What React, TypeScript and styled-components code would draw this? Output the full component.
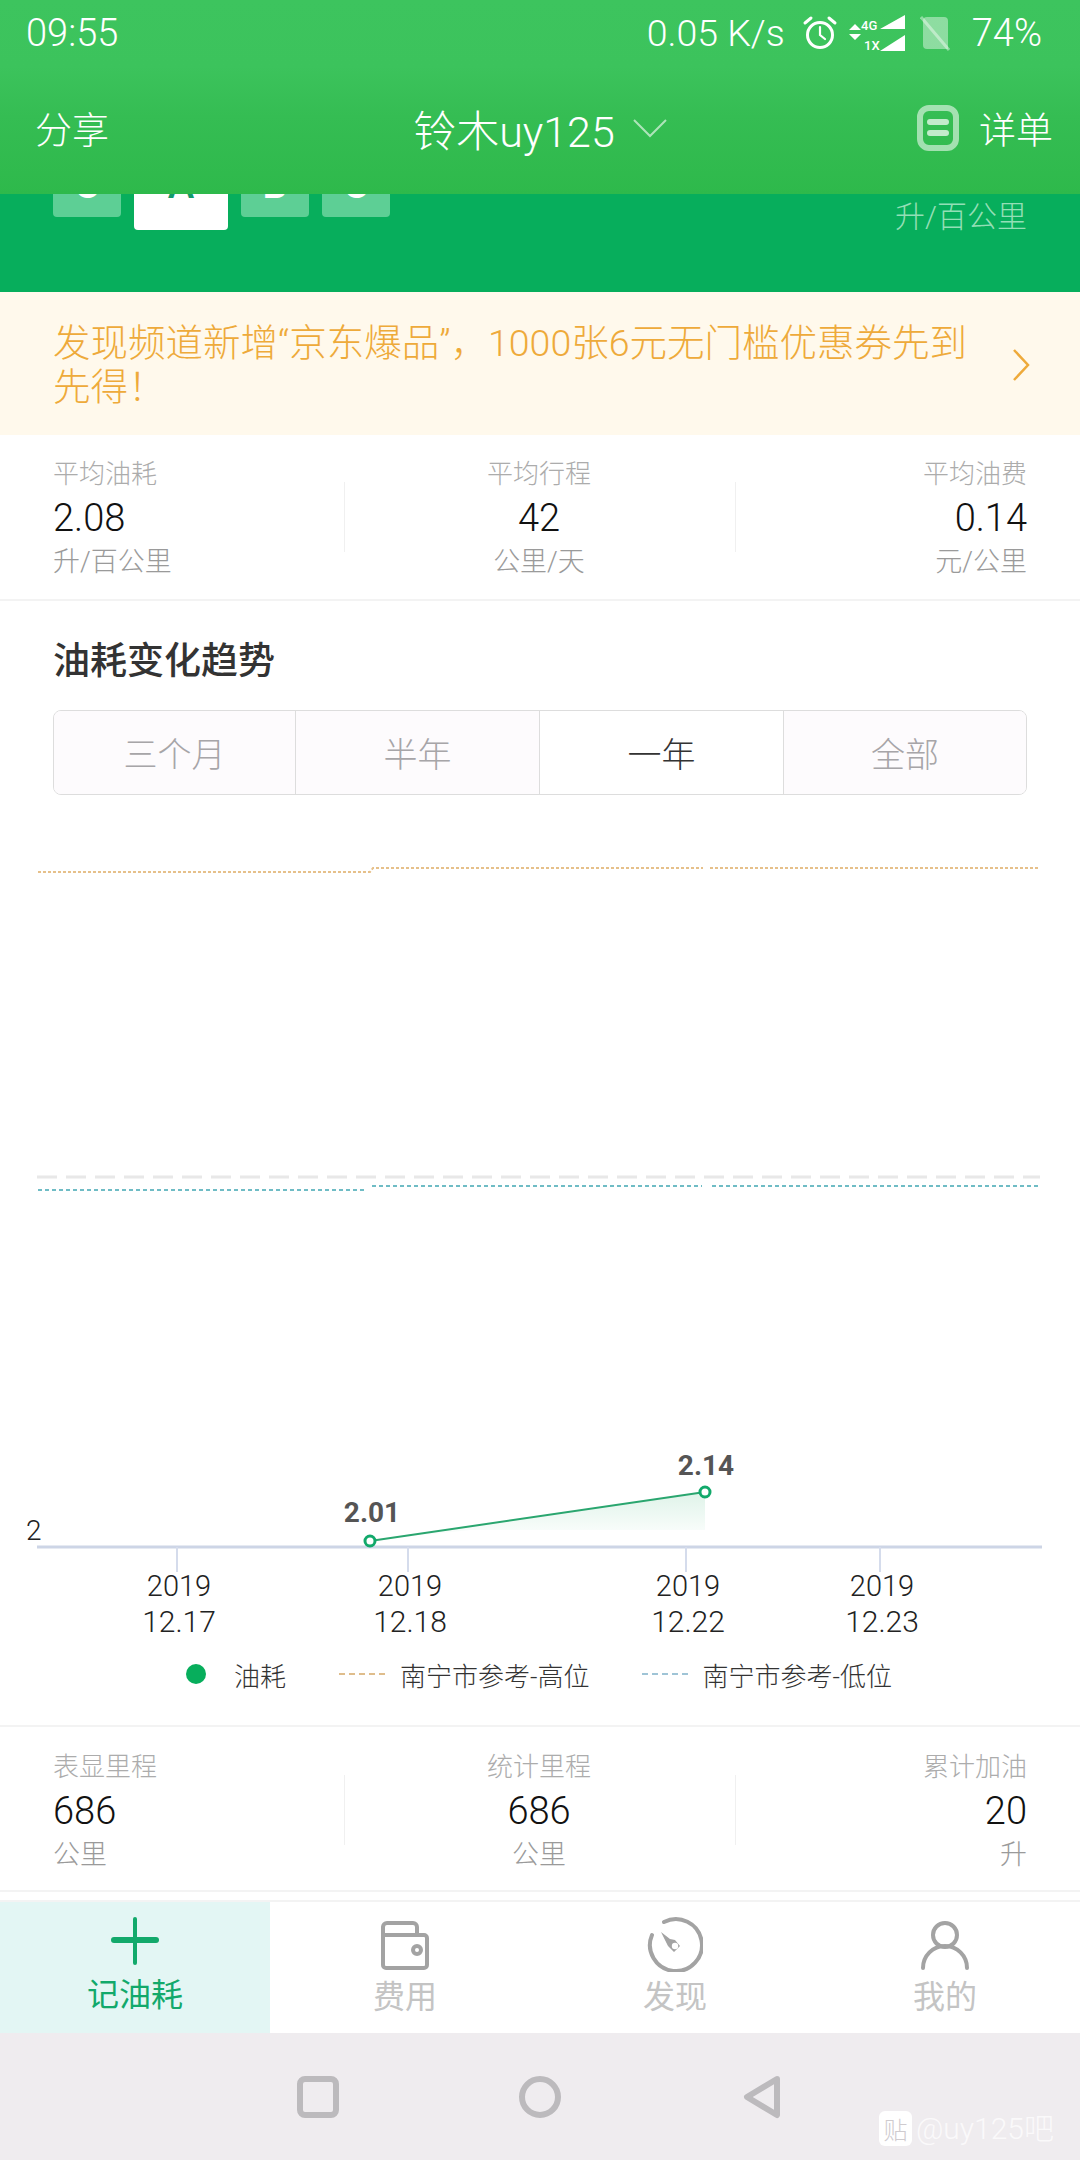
import styled, { createGlobalStyle } from 'styled-components';

const GlobalStyle = createGlobalStyle`
  html, body {
    margin: 0;
    padding: 0;
    background: #ffffff;
  }
  * {
    box-sizing: border-box;
  }
`;

const Page = styled.div`
  position: relative;
  width: 1080px;
  height: 2160px;
  overflow: hidden;
  display: flex;
  flex-direction: column;
  background: #ffffff;
  font-family: Roboto, 'Noto Sans CJK SC', sans-serif;
  font-weight: 300;
`;

const Header = styled.header`
  height: 194px;
  flex: none;
  display: flex;
  flex-direction: column;
  color: #ffffff;
  background: linear-gradient(180deg, #3dc45e 0%, #3cc35c 34%, #35bd53 60%, #2eb94b 100%);
`;

const StatusBar = styled.div`
  height: 66px;
  display: flex;
  align-items: center;
  justify-content: space-between;
  padding: 0 38px 0 26px;
  font-size: 38px;
`;

const StatusRight = styled.div`
  display: flex;
  align-items: center;
`;

const Speed = styled.span`
  margin-right: 17px;
  font-size: 37.5px;
`;

const NavBar = styled.div`
  height: 128px;
  display: grid;
  grid-template-columns: 1fr auto 1fr;
  align-items: center;
  padding: 0 35px 5px;
  font-size: 37px;
`;

const NavTitle = styled.div`
  display: flex;
  align-items: center;
  gap: 18px;
  font-size: 43px;
`;

const NavDetail = styled.div`
  display: flex;
  align-items: center;
  justify-content: flex-end;
  gap: 20px;
  margin-right: -8px;
`;

const Hero = styled.section`
  height: 98px;
  flex: none;
  overflow: hidden;
  display: flex;
  justify-content: space-between;
  padding: 0 53px;
  background: #07ae5c;
`;

const ChipRow = styled.div`
  display: flex;
  align-items: flex-start;
  gap: 13px;
  margin-top: -37px;
`;

const Chip = styled.div<{ $selected?: boolean }>`
  width: ${({ $selected }) => ($selected ? 94 : 68)}px;
  height: ${({ $selected }) => ($selected ? 73 : 60)}px;
  line-height: 56px;
  text-align: center;
  font-size: 40px;
  font-weight: 500;
  border-radius: 4px;
  color: ${({ $selected }) => ($selected ? '#129b6b' : '#ffffff')};
  background: ${({ $selected }) => ($selected ? '#ffffff' : '#5dcf95')};
`;

const HeroUnit = styled.div`
  margin-top: 3px;
  font-size: 30px;
  line-height: 40px;
  color: #93dfb6;
`;

const Notice = styled.section`
  height: 143px;
  flex: none;
  display: flex;
  padding: 29px 50px 0 53px;
  background: #fff9ec;
`;

const NoticeText = styled.div`
  width: 930px;
  font-size: 37.5px;
  line-height: 44px;
  color: #eeaa3a;
`;

const NoticeArrow = styled.svg`
  margin: 27px 0 0 auto;
`;

const Stats = styled.section<{ $top: number; $ruled?: boolean }>`
  height: ${({ $top }) => 149 + $top}px;
  flex: none;
  display: flex;
  align-items: flex-start;
  padding: ${({ $top }) => $top}px 53px 0;
  border-bottom: 2px solid #f3f3f3;
  border-top: ${({ $ruled }) => ($ruled ? '2px solid #f3f3f3' : 'none')};
`;

const StatCell = styled.div<{ $align: 'left' | 'center' | 'right'; $wide?: boolean }>`
  width: ${({ $wide }) => ($wide ? 390 : 291)}px;
  padding-right: ${({ $wide }) => ($wide ? 2 : 0)}px;
  text-align: ${({ $align }) => $align};
`;

const StatDivider = styled.div`
  width: 1px;
  height: 70px;
  margin-top: 30px;
  background: #f0f0f0;
`;

const StatLabel = styled.div`
  font-size: 26px;
  line-height: 44px;
  color: #acacac;
`;

const StatValue = styled.div`
  font-size: 38px;
  line-height: 44px;
  color: #111111;
`;

const StatUnit = styled.div`
  font-size: 27px;
  line-height: 44px;
  color: #9a9a9a;
`;

const TrendTitle = styled.h2`
  margin: 36px 0 23px 53px;
  font-size: 37px;
  line-height: 50px;
  font-weight: 500;
  color: #333333;
`;

const RangeTabs = styled.div`
  height: 85px;
  margin: 0 53px;
  flex: none;
  display: grid;
  grid-template-columns: 241px 244px 244px 1fr;
  border: 1px solid #dddddd;
  border-radius: 8px;
  overflow: hidden;
`;

const RangeTab = styled.div<{ $active?: boolean }>`
  display: flex;
  align-items: center;
  justify-content: center;
  font-size: 34px;
  color: ${({ $active }) => ($active ? '#333333' : '#a7a5a8')};
  background: ${({ $active }) => ($active ? '#ffffff' : '#fdfbfd')};
  border-left: 1px solid #dddddd;

  &:first-child {
    border-left: none;
  }
`;

const Chart = styled.svg`
  display: block;
  flex: none;
  font-family: Roboto, 'Noto Sans CJK SC', sans-serif;
`;

const Legend = styled.div`
  height: 54px;
  flex: none;
  display: flex;
  align-items: center;
  padding-left: 186px;
  margin-bottom: 24px;
  gap: 53px;
  font-size: 26px;
  color: #333333;
`;

const LegendItem = styled.div<{ $gap: number }>`
  display: flex;
  align-items: center;
  gap: ${({ $gap }) => $gap}px;
`;

const LegendDot = styled.span`
  width: 20px;
  height: 20px;
  border-radius: 50%;
  background: #07ae5c;
`;

const LegendDash = styled.span<{ $color: string }>`
  width: 46px;
  border-top: 2px dashed ${({ $color }) => $color};
`;

const TabBar = styled.nav`
  height: 133px;
  flex: none;
  margin-top: 8px;
  display: grid;
  grid-template-columns: repeat(4, 270px);
  border-top: 2px solid #f3f3f3;
`;

const Tab = styled.div<{ $active?: boolean }>`
  display: flex;
  flex-direction: column;
  align-items: center;
  padding-top: 14px;
  background: ${({ $active }) => ($active ? '#e3f6f4' : '#ffffff')};
  color: ${({ $active }) => ($active ? '#12a96b' : '#c4c4c4')};
`;

const TabLabel = styled.span<{ $active?: boolean }>`
  margin-top: ${({ $active }) => ($active ? 1 : 3)}px;
  font-size: 32px;
  line-height: 44px;
  font-weight: 400;
`;

const SystemBar = styled.div`
  flex: 1;
  display: flex;
  align-items: center;
  justify-content: center;
  gap: 174px;
  background: #efecef;
`;

const Watermark = styled.div`
  position: absolute;
  right: 26px;
  bottom: 12px;
  display: flex;
  align-items: center;
  gap: 4px;
  font-size: 30px;
  color: rgba(255, 255, 255, 0.72);
`;

const WatermarkBadge = styled.span`
  width: 33px;
  height: 35px;
  display: flex;
  align-items: center;
  justify-content: center;
  border-radius: 6px;
  background: #ffffff;
  font-size: 24px;
  color: #cfcbcf;
`;

const WatermarkText = styled.span`
  margin-top: -4px;
`;

const AlarmIcon = () => (
  <svg width="36" height="36" viewBox="0 0 36 36" fill="none" stroke="#fff" strokeLinecap="round">
    <circle cx="18" cy="20" r="12.5" strokeWidth="3" />
    <path d="M18 12v8l5 4" strokeWidth="2.2" />
    <path d="M3 8l6-5M33 8l-6-5" strokeWidth="3" />
  </svg>
);

const SignalIcon = () => (
  <svg width="58" height="38" viewBox="0 0 58 38" fill="#fff" style={{ marginLeft: 10 }}>
    <path d="M1 16l6-6 6 6zM1 20h12l-6 6z" />
    <text x="13" y="16" fontSize="13" fontWeight="500" fontFamily="Roboto">4G</text>
    <text x="16" y="36" fontSize="13" fontWeight="500" fontFamily="Roboto">1X</text>
    <path d="M32 15L57 1v14zM32 37l25-16v16z" />
  </svg>
);

const SimIcon = () => (
  <svg width="32" height="36" viewBox="0 0 32 36" fill="none" style={{ margin: '0 20px 0 14px' }}>
    <path d="M3 6a4 4 0 0 1 4-4h17a4 4 0 0 1 4 4v28H7a4 4 0 0 1-4-4z" fill="#fff" fillOpacity="0.42" />
    <path d="M1 2l28 33" stroke="#fff" strokeOpacity="0.42" strokeWidth="3" />
  </svg>
);

const DetailIcon = () => (
  <svg width="42" height="46" viewBox="0 0 42 46" fill="none" stroke="#fff" strokeOpacity="0.55" strokeLinecap="round">
    <rect x="3" y="3" width="36" height="40" rx="9" strokeWidth="6" />
    <path d="M13 17h16M13 28h16" strokeWidth="6" strokeOpacity="0.7" />
  </svg>
);

const PlusIcon = () => (
  <svg width="56" height="56" viewBox="0 0 56 56" fill="none" stroke="#12a96b" strokeLinecap="round">
    <path d="M7 24h42" strokeWidth="6" />
    <path d="M28 3v44" strokeWidth="4" />
  </svg>
);

const WalletIcon = () => (
  <svg width="56" height="56" viewBox="0 0 56 56" fill="none" stroke="#a3a3a3" strokeWidth="4" strokeLinejoin="round">
    <path d="M6 19v-8a4 4 0 0 1 4-4h26a4 4 0 0 1 4 4v8" />
    <path d="M6 19h41a3 3 0 0 1 3 3v27a3 3 0 0 1-3 3H9a3 3 0 0 1-3-3z" />
    <circle cx="40" cy="34" r="4" />
  </svg>
);

const DialIcon = () => (
  <svg width="56" height="56" viewBox="0 0 56 56" fill="none" stroke="#a3a3a3" strokeWidth="4" strokeLinecap="round">
    <path d="M17 6A26 26 0 1 1 5 19" />
    <path d="M14 16l9 7 5 1 5 6-6 6-6-6z" fill="#a3a3a3" stroke="none" />
    <circle cx="28" cy="30" r="3.2" fill="#fff" stroke="none" />
  </svg>
);

const PersonIcon = () => (
  <svg width="56" height="56" viewBox="0 0 56 56" fill="none" stroke="#a3a3a3" strokeWidth="4" strokeLinecap="round">
    <circle cx="28" cy="19" r="12" />
    <path d="M6 52a22 22 0 0 1 44 0" />
  </svg>
);

const topStats = [
  { label: '平均油耗', value: '2.08', unit: '升/百公里' },
  { label: '平均行程', value: '42', unit: '公里/天' },
  { label: '平均油费', value: '0.14', unit: '元/公里' },
];

const bottomStats = [
  { label: '表显里程', value: '686', unit: '公里' },
  { label: '统计里程', value: '686', unit: '公里' },
  { label: '累计加油', value: '20', unit: '升' },
];

const ticks = [
  { x: 177, date: '12.17' },
  { x: 408, date: '12.18' },
  { x: 686, date: '12.22' },
  { x: 880, date: '12.23' },
];

function StatRow({ items, top, ruled }: { items: typeof topStats; top: number; ruled?: boolean }) {
  return (
    <Stats $top={top} $ruled={ruled}>
      <StatCell $align="left">
        <StatLabel>{items[0].label}</StatLabel>
        <StatValue>{items[0].value}</StatValue>
        <StatUnit>{items[0].unit}</StatUnit>
      </StatCell>
      <StatDivider />
      <StatCell $align="center" $wide>
        <StatLabel>{items[1].label}</StatLabel>
        <StatValue>{items[1].value}</StatValue>
        <StatUnit>{items[1].unit}</StatUnit>
      </StatCell>
      <StatDivider />
      <StatCell $align="right">
        <StatLabel>{items[2].label}</StatLabel>
        <StatValue>{items[2].value}</StatValue>
        <StatUnit>{items[2].unit}</StatUnit>
      </StatCell>
    </Stats>
  );
}

export default function App() {
  return (
    <Page>
      <GlobalStyle />
      <Header>
        <StatusBar>
          <span>09:55</span>
          <StatusRight>
            <Speed>0.05 K/s</Speed>
            <AlarmIcon />
            <SignalIcon />
            <SimIcon />
            <span>74%</span>
          </StatusRight>
        </StatusBar>
        <NavBar>
          <span>分享</span>
          <NavTitle>
            铃木uy125
            <svg width="34" height="20" viewBox="0 0 34 20" fill="none" stroke="#fff" strokeOpacity="0.6" strokeWidth="2">
              <path d="M1 2l16 16L33 2" />
            </svg>
          </NavTitle>
          <NavDetail>
            <DetailIcon />
            详单
          </NavDetail>
        </NavBar>
      </Header>

      <Hero>
        <ChipRow>
          <Chip>C</Chip>
          <Chip $selected>A</Chip>
          <Chip>B</Chip>
          <Chip>C</Chip>
        </ChipRow>
        <HeroUnit>升/百公里</HeroUnit>
      </Hero>

      <Notice>
        <NoticeText>发现频道新增“京东爆品”，1000张6元无门槛优惠券先到先得！</NoticeText>
        <NoticeArrow width="18" height="34" viewBox="0 0 18 34" fill="none" stroke="#eeaa3a" strokeWidth="2.5">
          <path d="M2 2l14 15L2 32" />
        </NoticeArrow>
      </Notice>

      <StatRow items={topStats} top={17} />

      <TrendTitle>油耗变化趋势</TrendTitle>
      <RangeTabs>
        <RangeTab>三个月</RangeTab>
        <RangeTab>半年</RangeTab>
        <RangeTab $active>一年</RangeTab>
        <RangeTab>全部</RangeTab>
      </RangeTabs>

      <Chart width="1080" height="852" viewBox="0 795 1080 852">
        <defs>
          <linearGradient id="fuelArea" x1="0" y1="0" x2="0" y2="1">
            <stop offset="0" stopColor="#dff3e9" />
            <stop offset="1" stopColor="#ffffff" />
          </linearGradient>
        </defs>
        <g fill="none" strokeWidth="2">
          <path d="M38 872H370L373 868H703M710 868H1040" stroke="#e6c08a" strokeDasharray="3 2" />
          <path d="M37 1177H1040" stroke="#e8e8e8" strokeWidth="3" strokeDasharray="20 9" />
          <path d="M38 1190H365M372 1186H702M712 1186H1040" stroke="#6fbcc5" strokeDasharray="4 3" />
        </g>
        <path d="M370 1541L705 1492V1530H470z" fill="url(#fuelArea)" />
        <path d="M37 1547H1042" stroke="#cdd5e6" strokeWidth="3" />
        {ticks.map(({ x, date }) => (
          <g key={date}>
            <path d={`M${x} 1547V1572`} stroke="#d5dcec" strokeWidth="2" />
            <text x={x + 2} y="1596" fontSize="29" fill="#222" textAnchor="middle" fontWeight="300">2019</text>
            <text x={x + 2} y="1632" fontSize="30" fill="#222" textAnchor="middle" fontWeight="300">{date}</text>
          </g>
        ))}
        <text x="26" y="1540" fontSize="28" fill="#222" fontWeight="300">2</text>
        <path d="M370 1541L705 1492" stroke="#2aa66f" strokeWidth="2" />
        <circle cx="370" cy="1541" r="5" fill="#fff" stroke="#12a96b" strokeWidth="3" />
        <circle cx="705" cy="1492" r="5" fill="#fff" stroke="#12a96b" strokeWidth="3" />
        <text x="372" y="1522" fontSize="28" fill="#555" textAnchor="middle" fontWeight="700">2.01</text>
        <text x="706" y="1475" fontSize="28" fill="#555" textAnchor="middle" fontWeight="700">2.14</text>
      </Chart>

      <Legend>
        <LegendItem $gap={28}>
          <LegendDot />
          油耗
        </LegendItem>
        <LegendItem $gap={15}>
          <LegendDash $color="#dfbd8c" />
          南宁市参考-高位
        </LegendItem>
        <LegendItem $gap={14}>
          <LegendDash $color="#9fc4d6" />
          南宁市参考-低位
        </LegendItem>
      </Legend>

      <StatRow items={bottomStats} top={18} ruled />

      <TabBar>
        <Tab $active>
          <PlusIcon />
          <TabLabel $active>记油耗</TabLabel>
        </Tab>
        <Tab>
          <WalletIcon />
          <TabLabel>费用</TabLabel>
        </Tab>
        <Tab>
          <DialIcon />
          <TabLabel>发现</TabLabel>
        </Tab>
        <Tab>
          <PersonIcon />
          <TabLabel>我的</TabLabel>
        </Tab>
      </TabBar>

      <SystemBar>
        <svg width="48" height="48" viewBox="0 0 48 48" fill="none" stroke="#bcbabd" strokeWidth="6">
          <rect x="6" y="6" width="36" height="36" rx="5" />
        </svg>
        <svg width="48" height="48" viewBox="0 0 48 48" fill="none" stroke="#bcbabd" strokeWidth="6">
          <circle cx="24" cy="24" r="18" />
        </svg>
        <svg width="48" height="48" viewBox="0 0 48 48" fill="none" stroke="#bcbabd" strokeWidth="6" strokeLinejoin="round">
          <path d="M39 6L9 24l30 18z" />
        </svg>
      </SystemBar>

      <Watermark>
        <WatermarkBadge>贴</WatermarkBadge>
        <WatermarkText>@uy125吧</WatermarkText>
      </Watermark>
    </Page>
  );
}
